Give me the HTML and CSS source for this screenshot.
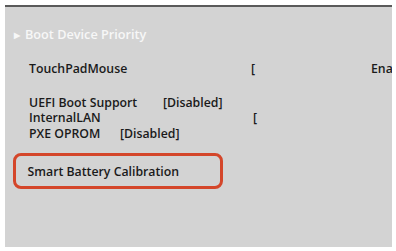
FILE: index.html
```html
<!DOCTYPE html>
<html>
<head>
<meta charset="utf-8">
<link rel="stylesheet" href="styles.css">
</head>
<body>
<div class="panel">
  <div class="heading"><span class="tri">&#9654;</span>Boot Device Priority</div>
  <div class="row touch"><span class="c1">TouchPadMouse</span><span class="c2">[</span><span>Ena</span></div>
  <div class="group">
    <div class="row uefi"><span class="c1">UEFI Boot Support</span><span>[Disabled]</span></div>
    <div class="row lan"><span class="c1">InternalLAN</span><span>[</span></div>
    <div class="row pxe"><span class="c1">PXE OPROM</span><span>[Disabled]</span></div>
  </div>
  <div class="hl"><span>Smart Battery Calibration</span></div>
</div>
</body>
</html>
```
FILE: styles.css
```css
html, body {
  margin: 0;
  padding: 0;
  background: #ffffff;
  width: 396px;
  height: 251px;
  overflow: hidden;
}
.panel {
  margin: 5px 0 0 5px;
  width: 387px;
  height: 242px;
  background: #d3d3d3;
  border-top: 2px solid #5a5a5a;
  box-sizing: border-box;
  font-family: "Open Sans", "Liberation Sans", sans-serif;
  font-weight: 600;
  font-size: 12.3px;
  color: #1a1a1a;
  padding-top: 18px;
  overflow: hidden;
}
.heading {
  color: #f7f7f7;
  font-size: 12.7px;
  display: flex;
  align-items: center;
  padding-left: 9px;
  height: 18px;
}
.tri {
  font-size: 8px;
  margin-right: 5px;
}
.row {
  display: flex;
  align-items: center;
  height: 15px;
  white-space: nowrap;
  padding-left: 24px;
}
.touch {
  margin-top: 18px;
}
.touch .c1 { width: 222px; flex: none; }
.touch .c2 { width: 120px; flex: none; }
.group {
  margin-top: 18.5px;
}
.group .row {
  height: 15.5px;
}
.uefi .c1 { width: 134px; flex: none; }
.lan .c1 { width: 224px; flex: none; }
.pxe .c1 { width: 91px; flex: none; }
.hl {
  margin: 12px 0 0 8px;
  width: 210px;
  height: 36px;
  box-sizing: border-box;
  border: 3.5px solid #d4462a;
  border-radius: 8px;
  display: flex;
  align-items: center;
  padding-left: 11.5px;
  white-space: nowrap;
}
```
